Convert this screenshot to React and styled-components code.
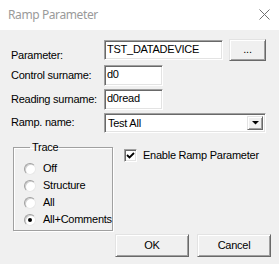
import React from 'react';
import styled, { createGlobalStyle } from 'styled-components';

const Global = createGlobalStyle`
  html, body { margin: 0; padding: 0; background: #f0f0f0; }
  body { font-family: "Liberation Sans", Arial, sans-serif; font-size: 11px; }
  * { box-sizing: border-box; }
`;

const Window = styled.div`
  width: 279px;
  height: 264px;
  display: flex;
  flex-direction: column;
  background: #f0f0f0;
  overflow: hidden;
`;

const TitleBar = styled.div`
  height: 30px;
  flex: none;
  background: #fff;
  display: flex;
  align-items: center;
  justify-content: space-between;
  padding: 0 9px 1px 8px;
`;

const Title = styled.span`
  font-family: "Noto Sans", "Open Sans", sans-serif;
  font-size: 12px;
  color: #9a9a9a;
  letter-spacing: -0.4px;
`;

const CloseIcon = styled.svg`
  display: block;
  width: 11px;
  height: 11px;
`;

const Body = styled.div`
  flex: 1;
  display: flex;
  flex-direction: column;
  padding-top: 9px;
  font-family: "Liberation Sans", Arial, sans-serif;
  font-size: 11px;
  line-height: 13px;
  letter-spacing: -0.25px;
  color: #000;
`;

const Row = styled.div`
  display: flex;
  align-items: flex-start;
  height: ${p => p.$h}px;
  margin-top: ${p => p.$mt || 0}px;
`;

const Label = styled.div`
  width: 93px;
  margin-left: 11px;
  padding-top: ${p => p.$pt}px;
  white-space: nowrap;
`;

const sunken = `
  background: #fff;
  border: 1px solid;
  border-color: #a0a0a0 #fff #fff #a0a0a0;
  box-shadow: inset 1px 1px 0 #696969, inset -1px -1px 0 #e3e3e3;
`;

const raised = `
  background: #f0f0f0;
  border: 1px solid;
  border-color: #e3e3e3 #696969 #696969 #e3e3e3;
  box-shadow: inset 1px 1px 0 #fff, inset -1px -1px 0 #a0a0a0;
`;

const TextBox = styled.div`
  ${sunken}
  width: ${p => p.$w}px;
  height: ${p => p.$h}px;
  margin-top: ${p => p.$mt || 0}px;
  padding: 2px 0 0 2px;
  white-space: nowrap;
  overflow: hidden;
`;

const Button = styled.div`
  ${raised}
  width: ${p => p.$w}px;
  height: ${p => p.$h}px;
  margin-left: ${p => p.$ml || 0}px;
  display: flex;
  align-items: center;
  justify-content: center;
  padding-bottom: 1px;
`;

const Combo = styled.div`
  ${sunken}
  width: 162px;
  height: 20px;
  display: flex;
  padding: 2px;
`;

const ComboText = styled.div`
  flex: 1;
  padding: 1px 0 0 1px;
  white-space: nowrap;
`;

const DropButton = styled.div`
  ${raised}
  width: 16px;
  height: 100%;
  display: flex;
  align-items: center;
  justify-content: center;
`;

const Lower = styled.div`
  display: flex;
  align-items: flex-start;
  margin-top: 8px;
`;

const Group = styled.fieldset`
  margin: 0 0 0 13px;
  width: 100px;
  min-width: 0;
  height: 90px;
  padding: 6px 0 0 10px;
  border: 1px solid #a0a0a0;
  box-shadow: inset 1px 1px 0 #fff, 1px 1px 0 #fff;
`;

const Legend = styled.legend`
  margin-left: 6px;
  padding: 0 1px 0 2px;
  line-height: 13px;
`;

const RadioRow = styled.div`
  display: flex;
  align-items: center;
  height: 17px;
  white-space: nowrap;
`;

const RadioCircle = styled.span`
  flex: none;
  width: 12px;
  height: 12px;
  border-radius: 50%;
  border: 1px solid;
  border-color: #a0a0a0 #e8e8e8 #e8e8e8 #a0a0a0;
  box-shadow: inset 1px 1px 0 #d0d0d0;
  background: #fff;
  margin-right: 7px;
  display: flex;
  align-items: center;
  justify-content: center;
`;

const Dot = styled.span`
  width: 4px;
  height: 4px;
  border-radius: 50%;
  background: #000;
`;

const CheckColumn = styled.div`
  margin: 7px 0 0 11px;
`;

const CheckRow = styled.div`
  display: flex;
  align-items: center;
  white-space: nowrap;
`;

const CheckBox = styled.span`
  ${sunken}
  width: 13px;
  height: 13px;
  margin-right: 6px;
  display: flex;
  align-items: center;
  justify-content: center;
`;

const CheckText = styled.span`
  padding-top: 1px;
`;

const Buttons = styled.div`
  display: flex;
  justify-content: flex-end;
  gap: 8px;
  padding-right: 8px;
  margin-top: 3px;
`;

function Radio({ label, checked }) {
  return (
    <RadioRow>
      <RadioCircle>{checked && <Dot />}</RadioCircle>
      <span>{label}</span>
    </RadioRow>
  );
}

export default function App() {
  return (
    <>
      <Global />
      <Window>
        <TitleBar>
          <Title>Ramp Parameter</Title>
          <CloseIcon viewBox="0 0 11 11">
            <path d="M0.5 0.5 L10.5 10.5 M10.5 0.5 L0.5 10.5" stroke="#707070" strokeWidth="1" fill="none" />
          </CloseIcon>
        </TitleBar>
        <Body>
          <Row $h={22}>
            <Label $pt={10}>Parameter:</Label>
            <TextBox $w={119} $h={20} $mt={1}>TST_DATADEVICE</TextBox>
            <Button $w={37} $h={22} $ml={6}>...</Button>
          </Row>
          <Row $h={21} $mt={4}>
            <Label $pt={4}>Control surname:</Label>
            <TextBox $w={59} $h={21}>d0</TextBox>
          </Row>
          <Row $h={21} $mt={3}>
            <Label $pt={4}>Reading surname:</Label>
            <TextBox $w={59} $h={21}>d0read</TextBox>
          </Row>
          <Row $h={20} $mt={3}>
            <Label $pt={3}>Ramp. name:</Label>
            <Combo>
              <ComboText>Test All</ComboText>
              <DropButton>
                <svg width="7" height="4" viewBox="0 0 7 4">
                  <polygon points="0,0 7,0 3.5,3.5" fill="#000" />
                </svg>
              </DropButton>
            </Combo>
          </Row>
          <Lower>
            <Group>
              <Legend>Trace</Legend>
              <Radio label="Off" />
              <Radio label="Structure" />
              <Radio label="All" />
              <Radio label="All+Comments" checked />
            </Group>
            <CheckColumn>
              <CheckRow>
                <CheckBox>
                  <svg width="9" height="9" viewBox="0 0 9 9">
                    <polyline points="1,4 3.5,6.5 8,2" stroke="#000" strokeWidth="1.8" fill="none" />
                  </svg>
                </CheckBox>
                <CheckText>Enable Ramp Parameter</CheckText>
              </CheckRow>
            </CheckColumn>
          </Lower>
          <Buttons>
            <Button $w={74} $h={23}>OK</Button>
            <Button $w={74} $h={23}>Cancel</Button>
          </Buttons>
        </Body>
      </Window>
    </>
  );
}
